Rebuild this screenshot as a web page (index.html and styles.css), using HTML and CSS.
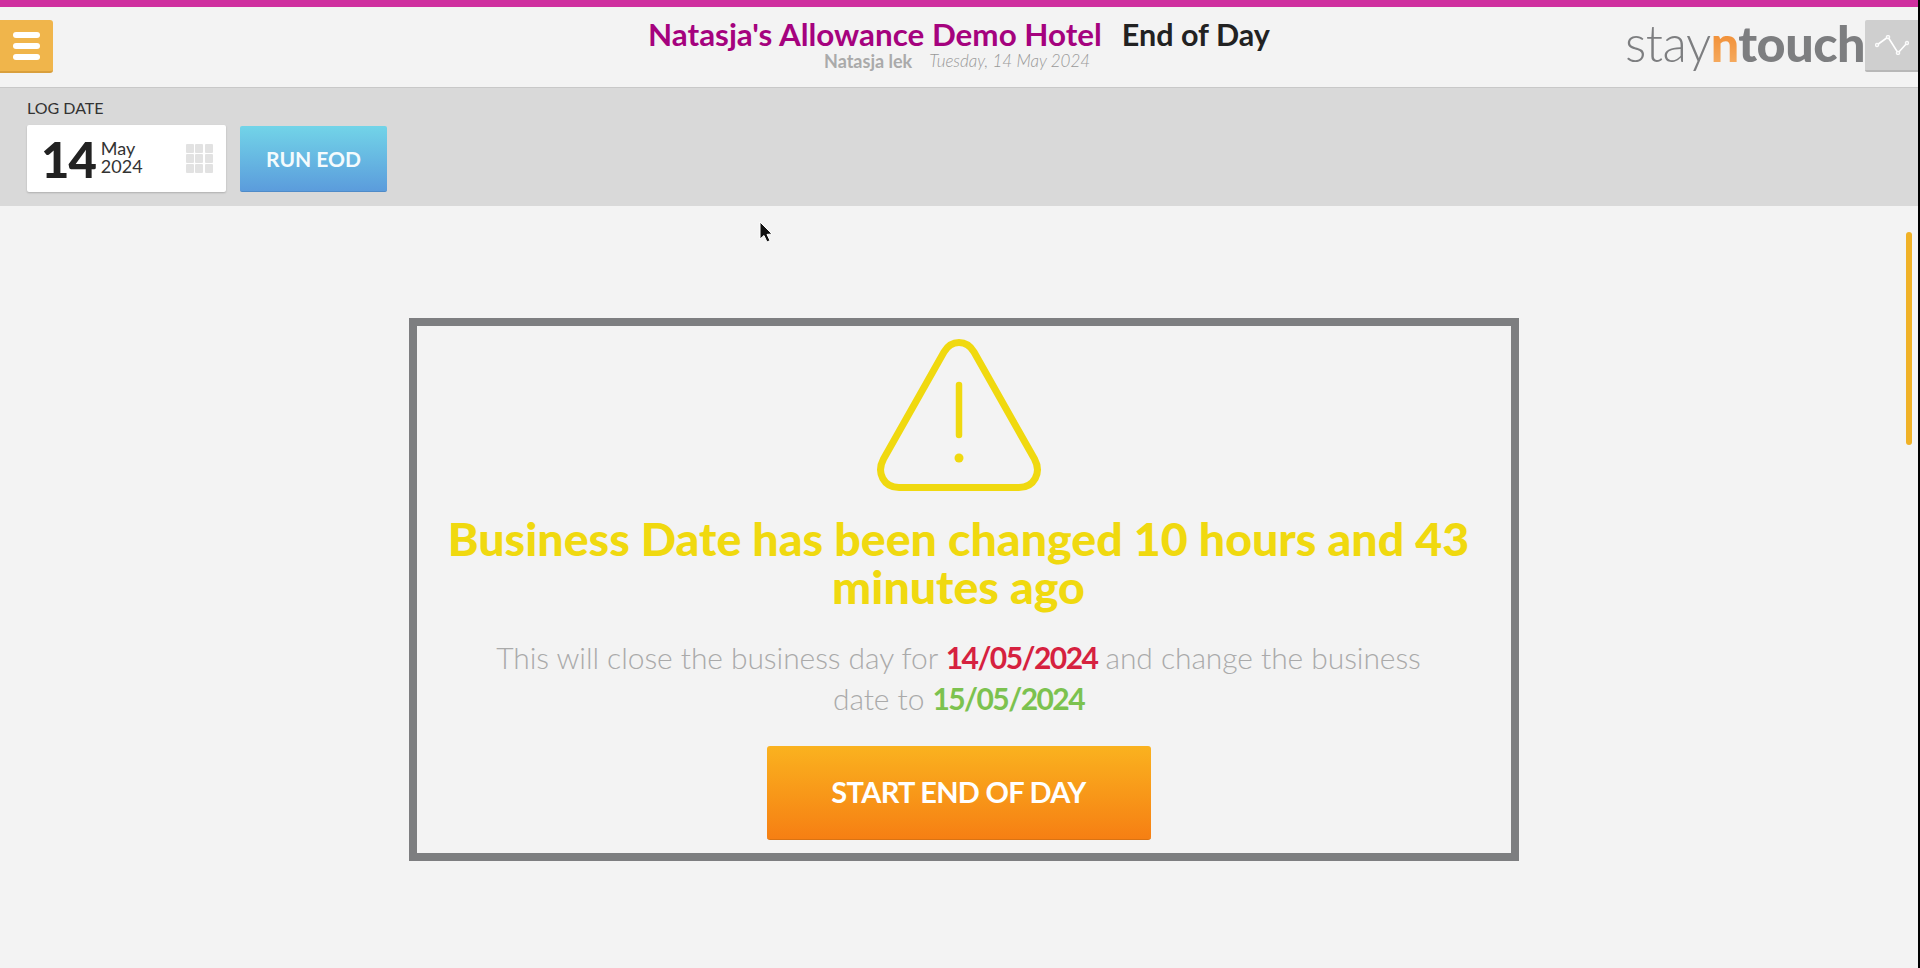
FILE: index.html
```html
<!DOCTYPE html>
<html lang="en">
<head>
    <meta charset="UTF-8">
    <meta name="viewport" content="width=device-width, initial-scale=1.0">
    <title>End of Day</title>
    <link rel="stylesheet" href="styles.css">
</head>
<body>
    <div class="topline"></div>
    <header class="header">
        <button class="menu-button" aria-label="Menu">
            <span></span><span></span><span></span>
        </button>
        <div class="titles">
            <div class="title-row">
                <span class="hotel-name">Natasja's Allowance Demo Hotel</span>
                <span class="page-name">End of Day</span>
            </div>
            <div class="sub-row">
                <span class="user-name">Natasja lek</span>
                <span class="today">Tuesday, 14 May 2024</span>
            </div>
        </div>
        <div class="logo"><span class="logo-stay">stay</span><span class="logo-n">n</span><span class="logo-touch">touch</span></div>
        <button class="graph-button" aria-label="Activity">
            <svg width="34" height="20" viewBox="0 0 34 20">
                <polyline points="2,10 13,2 23,18 32,8" fill="none" stroke="#fff" stroke-width="1.6"/>
                <circle cx="2" cy="10" r="1.8" fill="#e8e8e8" stroke="#fff" stroke-width="1"/>
                <circle cx="13" cy="2" r="1.8" fill="#e8e8e8" stroke="#fff" stroke-width="1"/>
                <circle cx="23" cy="18" r="1.8" fill="#e8e8e8" stroke="#fff" stroke-width="1"/>
                <circle cx="32" cy="8" r="1.8" fill="#e8e8e8" stroke="#fff" stroke-width="1"/>
            </svg>
        </button>
    </header>
    <section class="toolbar">
        <label class="log-label">LOG DATE</label>
        <div class="toolbar-row">
            <div class="date-box">
                <span class="date-day">14</span>
                <span class="date-rest">May<br>2024</span>
                <div class="date-grid">
                    <i></i><i></i><i></i><i></i><i></i><i></i><i></i><i></i><i></i>
                </div>
            </div>
            <button class="run-button">RUN EOD</button>
        </div>
    </section>
    <main class="content">
        <div class="card">
            <svg class="warning" width="168" height="154" viewBox="0 0 168 154">
                <path d="M84 4.5 C77 4.5 72.5 8 69 14 L8.5 121 C1 135 9 149.5 24 149.5 L144 149.5 C159 149.5 167 135 159.5 121 L99 14 C95.5 8 91 4.5 84 4.5 Z" fill="none" stroke="#f0d90f" stroke-width="7"/>
                <path d="M84 47 L84 97" stroke="#f0d90f" stroke-width="6.5" stroke-linecap="round"/>
                <circle cx="84" cy="120" r="4.5" fill="#f0d90f"/>
            </svg>
            <h1 class="card-title">Business Date has been changed 10 hours and 43 minutes ago</h1>
            <p class="card-text">This will close the business day for <b class="old-date">14/05/2024</b> and change the business<br>date to <b class="new-date">15/05/2024</b></p>
            <button class="start-button">START END OF DAY</button>
        </div>
    </main>
    <div class="scroll-thumb"></div>
    <svg class="cursor" width="16" height="24" viewBox="0 0 16 24">
        <path d="M1 1 L1 18 L5 14.5 L8 21 L11 19.6 L8 13.4 L13 13 Z" fill="#111" stroke="#fff" stroke-width="1"/>
    </svg>
</body>
</html>
```

FILE: styles.css
```css
html, body {
    height: 100%;
}

body {
    font-family: Lato, "Open Sans", sans-serif;
    margin: 0;
    padding: 0;
    background-color: #f3f3f3;
    color: #222;
    overflow: hidden;
    border-right: 2px solid #000;
    box-sizing: border-box;
}

button {
    font-family: inherit;
    border: none;
    padding: 0;
}

.topline {
    height: 7px;
    background-color: #cf2f9f;
}

.header {
    display: flex;
    align-items: flex-start;
    height: 79px;
    box-sizing: border-box;
    padding-top: 13px;
}

.menu-button {
    display: flex;
    flex-direction: column;
    justify-content: center;
    align-items: center;
    gap: 5px;
    width: 53px;
    height: 53px;
    background-color: #f0b54b;
    border-bottom: 2px solid #d99f3c;
    border-radius: 0 3px 3px 0;
    box-sizing: border-box;
}

.menu-button span {
    display: block;
    width: 27px;
    height: 6px;
    background-color: #fff;
    border-radius: 3px;
}

.titles {
    flex: 1;
    padding-left: 595px;
    margin-top: -2px;
    text-align: left;
}

.title-row {
    display: flex;
    gap: 20px;
    font-size: 31.4px;
    font-weight: 700;
    line-height: 33px;
}

.hotel-name {
    color: #a5027e;
}

.page-name {
    color: #222;
    font-size: 30.5px;
}

.sub-row {
    display: flex;
    gap: 17px;
    font-size: 18px;
    line-height: 20px;
    padding-left: 176px;
    color: #aaa;
}

.user-name {
    font-weight: 700;
}

.today {
    font-style: italic;
    font-weight: 300;
    font-size: 17px;
    color: #999;
}

.logo {
    font-size: 50.3px;
    line-height: 58px;
    letter-spacing: -0.5px;
    color: #7d7e80;
    white-space: nowrap;
    margin-top: -6px;
}

.logo-stay {
    font-weight: 300;
}

.logo-n {
    font-weight: 900;
    background: linear-gradient(#ef7d1a, #f6b26b);
    -webkit-background-clip: text;
    background-clip: text;
    color: transparent;
}

.logo-touch {
    font-weight: 900;
}

.graph-button {
    display: flex;
    align-items: center;
    justify-content: center;
    width: 53px;
    height: 52px;
    background-color: #cfcfcf;
    border-bottom: 2px solid #b8b8b8;
    border-radius: 2px 0 0 2px;
    box-sizing: border-box;
}

.toolbar {
    height: 119px;
    margin-top: 1px;
    padding: 10px 0 0 27px;
    box-sizing: border-box;
    background-color: #d9d9d9;
    border-top: 1px solid #c8c8c8;
}

.log-label {
    display: block;
    font-size: 16px;
    line-height: 20px;
    color: #333;
}

.toolbar-row {
    display: flex;
    gap: 14px;
    align-items: center;
    margin-top: 7px;
}

.date-box {
    display: flex;
    align-items: center;
    width: 199px;
    height: 67px;
    background-color: #fff;
    border-radius: 2px;
    box-shadow: 0 1px 2px rgba(0, 0, 0, 0.2);
    padding-left: 14px;
    box-sizing: border-box;
}

.date-day {
    font-size: 49px;
    font-weight: 900;
    color: #222;
    letter-spacing: -1px;
}

.date-rest {
    font-size: 18px;
    line-height: 18.5px;
    margin: 0 0 3px 5px;
    color: #333;
}

.date-grid {
    display: grid;
    grid-template-columns: repeat(3, 8px);
    gap: 1.5px;
    margin-left: 43px;
}

.date-grid i {
    display: block;
    height: 8.5px;
    border-radius: 1px;
    background-color: #e2e2e2;
}

.run-button {
    width: 147px;
    height: 66px;
    background: linear-gradient(#72d4e8, #5b9cdc);
    border-bottom: 1px solid #4f8bc8;
    border-radius: 2px;
    color: #f4fbfd;
    font-size: 21px;
    font-weight: 700;
}

.content {
    padding: 112px 0 0 409px;
}

.card {
    display: flex;
    flex-direction: column;
    align-items: center;
    width: 1110px;
    height: 543px;
    border: 8px solid #7d7e80;
    box-sizing: border-box;
    padding: 0 29px 0 18px;
    text-align: center;
}

.warning {
    margin-top: 12px;
    flex-shrink: 0;
}

.card-title {
    margin: 22px 0 0;
    font-size: 46.5px;
    line-height: 48px;
    font-weight: 900;
    color: #f0d90f;
}

.card-text {
    margin: 27px 0 0;
    width: 960px;
    font-size: 30px;
    line-height: 41px;
    font-weight: 300;
    letter-spacing: -0.07px;
    color: #aaa;
}

.old-date {
    color: #d6213f;
    font-weight: 700;
    letter-spacing: -1.55px;
}

.new-date {
    color: #7cc24f;
    font-weight: 700;
    letter-spacing: -1.55px;
}

.start-button {
    margin-top: 27px;
    width: 384px;
    height: 94px;
    flex-shrink: 0;
    padding-bottom: 3px;
    background: linear-gradient(#fab21f, #f67f13);
    border-bottom: 1px solid #d97314;
    border-radius: 3px;
    color: #fff;
    font-size: 29px;
    font-weight: 700;
    letter-spacing: -0.7px;
}

.scroll-thumb {
    position: absolute;
    top: 232px;
    left: 1906px;
    width: 6px;
    height: 213px;
    background-color: #f0b126;
    border-radius: 3px;
}

.cursor {
    position: absolute;
    top: 221px;
    left: 759px;
}
```
